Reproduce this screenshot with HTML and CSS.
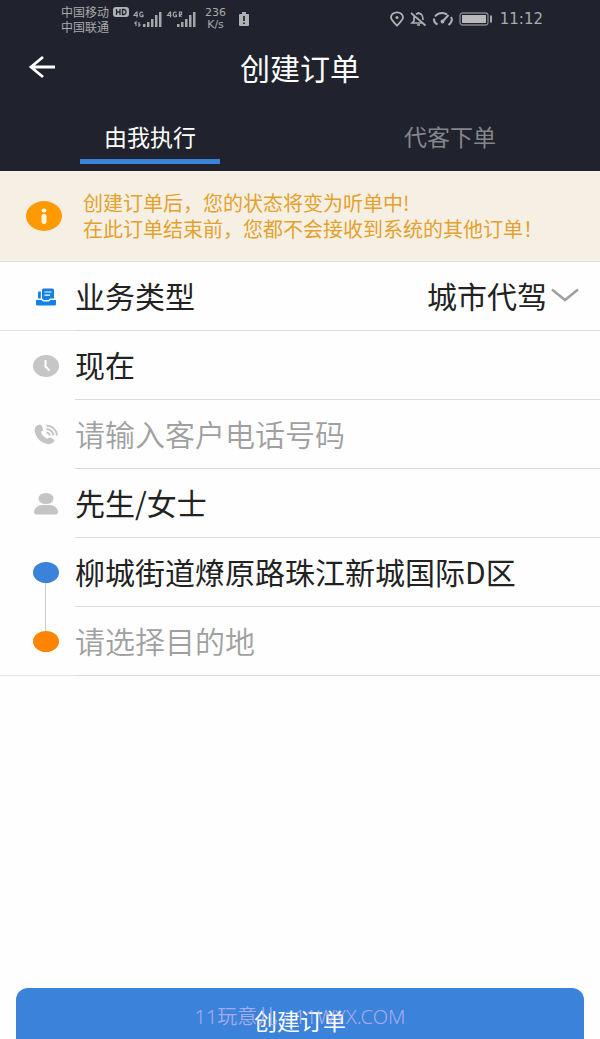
FILE: index.html
```html
<!DOCTYPE html>
<html lang="zh-CN">
<head>
<meta charset="utf-8">
<meta name="viewport" content="width=device-width, initial-scale=1">
<title>创建订单</title>
<link rel="stylesheet" href="styles.css">
</head>
<body>
<div class="app">
  <header class="header">
    <div class="status">
      <div class="status-group">
        <div class="carrier">
          <div class="carrier-line">中国移动
            <svg width="16" height="10" viewBox="0 0 16 10"><rect width="16" height="10" rx="3" fill="#b0b1b5"/><path d="M3.500 2v6M7 2v6M3.500 5H7M9.500 2.500v5h1.500q2-.3 2-2.500t-2-2.500z" fill="none" stroke="#20232d" stroke-width="1.300"/></svg>
          </div>
          <div>中国联通</div>
        </div>
        <svg class="signals" width="64" height="18" viewBox="0 0 64 18" fill="#a5a6aa">
          <path d="M10 14h2.500v3H10zM14 12h2.500v5H14zM18 9h2.500v8H18zM22 5h2.500v12H22zM26 2h2.500v15H26z"/>
          <path d="M44 14h2.500v3H44zM48 12h2.500v5H48zM52 9h2.500v8H52zM56 5h2.500v12H56zM60 2h2.500v15H60z"/>
          <path d="M3.500 2 1 5.500h4M4 1.500v6M10 2.500Q7 1 6.700 4.500 7 7.500 10 6.500V5H8.500M37 2l-2.500 3.500h4M37.500 1.500v6M43.500 2.500Q40.500 1 40.200 4.500q.3 3 3.300 2V5H42M46.500 7V2h2v2.500h-2l2 2.500M3 16v-4l-1.500 1.500M6 12v4l1.500-1.500" fill="none" stroke="#a5a6aa" stroke-width="1.200"/>
        </svg>
        <div class="speed"><div>236</div><div>K/s</div></div>
        <svg width="12" height="16" viewBox="0 0 12 16"><path d="M4 1h4v2h2.500Q11 3 11 4v10q0 1-1 1H2q-1 0-1-1V4q0-1 1-1h2z" fill="#b0b1b5"/><path d="M6 5v5M6 11.500V13" stroke="#20232d" stroke-width="1.700"/></svg>
      </div>
      <div class="status-group status-right">
        <svg width="16" height="16" viewBox="0 0 16 16" fill="none" stroke="#b0b1b5" stroke-width="1.800"><path d="M8 14.500C5 11.500 2 9 2 6.300a6 5 0 0 1 12 0C14 9 11 11.500 8 14.500z"/><circle cx="8" cy="6.500" r="1.500" fill="#b0b1b5" stroke="none"/></svg>
        <svg width="17" height="16" viewBox="0 0 17 16" fill="none" stroke="#b0b1b5" stroke-width="1.700"><path d="M1 2 15.500 14.500M4 5.500v4.500L2 12h9.500M6 3.200Q8.500 1.500 11.500 3.500 13 5 13 9M7 14h3M8.500 1v2"/></svg>
        <svg width="22" height="16" viewBox="0 0 22 16" fill="none" stroke="#b0b1b5" stroke-width="2"><path d="M5.500 13.500Q1.500 11.500 2 7.500M3 5.500Q6 1.500 12 2.200l3 1M19 6q2.500 4-2.500 8"/><path d="m10.500 10.500 6-6.500"/><circle cx="10.500" cy="10.500" r="1.900" fill="#b0b1b5" stroke="none"/></svg>
        <svg width="34" height="14" viewBox="0 0 34 14"><rect x="1" y="1" width="28" height="12" rx="2.500" fill="none" stroke="#85868b" stroke-width="1.300"/><rect x="3" y="3" width="24" height="8" fill="#b9b9bc"/><path d="M31 3.500h2v7h-2z" fill="#a5a6aa"/></svg>
        <time class="clock">11:12</time>
      </div>
    </div>
    <div class="titlebar">
      <button class="back" aria-label="返回"><svg width="28" height="24" viewBox="0 0 28 24" fill="none" stroke="#fff" stroke-width="2.800"><path d="M27 12H3M15 2 3 12l12 10"/></svg></button>
      <h1 class="title">创建订单</h1>
    </div>
    <nav class="tabs">
      <button class="tab tab-active">由我执行</button>
      <button class="tab">代客下单</button>
    </nav>
  </header>

  <section class="notice">
    <svg width="36" height="30" viewBox="0 0 36 30"><ellipse cx="18" cy="15" rx="18" ry="15" fill="#ff9a02"/><ellipse cx="18" cy="9.500" rx="2.500" ry="2" fill="#fff4dc"/><rect x="15.500" y="13" width="5" height="10" rx="2.200" fill="#fff4dc"/></svg>
    <p class="notice-text">创建订单后，您的状态将变为听单中!<br>在此订单结束前，您都不会接收到系统的其他订单！</p>
  </section>

  <form class="form" id="order">
    <div class="row row-edge">
      <div class="icon"><svg width="20" height="18" viewBox="0 0 20 18" fill="#1381e6"><path d="M0 12h5.500l1.500 1.500h6l1.500-1.500H20v4q0 1.500-1.500 1.500h-17Q0 17.500 0 16z"/><path d="M2 4.500Q2 3.500 3 3.500h1.800v7H2z"/><path d="M7.500.5h9Q18 .5 18 2v8.500h-4L12.500 12h-5L6 10.500V2Q6 .5 7.500.5z"/><path d="M8.500 4h7M8.500 7.200h5.500" stroke="#fff" stroke-width="1.200"/></svg></div>
      <div class="field">
        <label class="label" for="type">业务类型</label>
        <select class="select" id="type"><option>城市代驾</option></select>
        <svg class="chevron" width="28" height="14" viewBox="0 0 28 14" fill="none" stroke="#a0a0a0" stroke-width="2.600"><path d="m1 1.500 13 10.500 13-10.500"/></svg>
      </div>
    </div>
    <div class="row">
      <div class="icon"><svg width="26" height="22" viewBox="0 0 26 22"><ellipse cx="13" cy="11" rx="13" ry="11" fill="#c6c6c6"/><path d="M12.500 5v6.500l4 4" fill="none" stroke="#fff" stroke-width="2"/></svg></div>
      <div class="field"><input class="input" aria-label="时间" value="现在"></div>
    </div>
    <div class="row">
      <div class="icon"><svg width="24" height="22" viewBox="0 0 24 22"><path d="M3 1.500 5.500.5q2 0 2.500 1.500l1 3q.3 1.500-1.500 2.500-.8.500-.2 2 1.700 3 5 5 1 .5 2-.5 1.200-1 2.700-.2l2.500 1.500q1.500 1 .3 2.500-2.500 3.500-7.500 2Q5 18 1.800 11-1 4 3 1.500z" fill="#c4c4c4"/><path d="M12.500 8.500q2.700.3 3.300 3M12.500 5q6.200.5 7 6.500M12.500 1.500q9.300.5 10.500 10" fill="none" stroke="#c4c4c4" stroke-width="2"/></svg></div>
      <div class="field"><input class="input" type="tel" aria-label="客户电话" placeholder="请输入客户电话号码"></div>
    </div>
    <div class="row">
      <div class="icon"><svg width="24" height="22" viewBox="0 0 24 22" fill="#c4c4c4"><ellipse cx="12" cy="5.500" rx="7.500" ry="5.500"/><path d="M0 18.500Q1.500 12.500 8 12h8q6.500.5 8 6.500.2 3-2.500 3h-19Q0 21.500 0 18.500z"/></svg></div>
      <div class="field"><input class="input" aria-label="称呼" value="先生/女士"></div>
    </div>
    <div class="route">
      <div class="route-line"></div>
      <div class="row">
        <div class="icon"><span class="dot"></span></div>
        <div class="field"><input class="input" aria-label="出发地" value="柳城街道燎原路珠江新城国际D区"></div>
      </div>
      <div class="row row-edge">
        <div class="icon"><span class="dot dot-end"></span></div>
        <div class="field"><input class="input" aria-label="目的地" placeholder="请选择目的地"></div>
      </div>
    </div>
  </form>

  <footer class="footer">
    <button class="submit" form="order">创建订单</button>
    <span class="watermark">11玩意儿 - 11WYX.COM</span>
  </footer>
</div>
</body>
</html>
```
FILE: styles.css
```css
* { box-sizing: border-box; }
body {
  margin: 0;
  background: #fefefe;
  color: #222;
  font-family: "Noto Sans CJK SC", sans-serif;
}
button, input, select {
  font-family: inherit;
  border: 0;
  padding: 0;
  background: none;
}
svg { display: block; flex: none; }
.app {
  display: flex;
  flex-direction: column;
  min-height: 100vh;
}

.header { background: #20232d; color: #fff; }
.status {
  display: flex;
  justify-content: space-between;
  align-items: center;
  height: 38px;
  padding: 0 57px 0 61px;
  color: #a9aaae;
}
.status-group { display: flex; align-items: center; }
.carrier { font-size: 12px; line-height: 15px; }
.carrier-line { display: flex; align-items: center; gap: 4px; }
.signals { margin-left: 4px; }
.speed {
  margin: 0 12px 0 8px;
  font-family: "DejaVu Sans", sans-serif;
  font-size: 11px;
  line-height: 12px;
  text-align: center;
}
.status-right { gap: 5px; }
.clock {
  margin-left: 2px;
  font-family: "DejaVu Sans", sans-serif;
  font-size: 15px;
}
.titlebar {
  display: grid;
  grid-template-columns: 56px 1fr 56px;
  align-items: center;
  height: 58px;
}
.back { padding-left: 28px; }
.title {
  margin: 0;
  font-size: 30px;
  font-weight: 400;
  line-height: 40px;
  text-align: center;
}
.tabs {
  display: grid;
  grid-template-columns: 1fr 1fr;
  justify-items: center;
  height: 75px;
  padding: 24px 0 7px;
}
.tab {
  width: 140px;
  padding-bottom: 7px;
  border-bottom: 5px solid transparent;
  color: #85868a;
  font-size: 23px;
  line-height: 32px;
}
.tab-active { color: #fff; border-color: #3b82da; }

.notice {
  display: flex;
  align-items: center;
  gap: 21px;
  height: 91px;
  padding: 0 27px 0 26px;
  border-bottom: 1px solid #e2dfda;
  background: #f6f0e4;
}
.notice-text {
  margin: 0;
  color: #e3a12d;
  font-size: 20px;
  line-height: 26px;
  white-space: nowrap;
}

.row {
  display: grid;
  grid-template-columns: 75px 1fr;
  height: 69px;
}
.row-edge { box-shadow: inset 0 -1px #e4e4e4; }
.icon {
  display: flex;
  align-items: center;
  justify-content: center;
  padding: 0 16px 0 33px;
}
.field {
  display: flex;
  align-items: center;
  min-width: 0;
  padding-bottom: 2px;
  border-bottom: 1px solid #dcdcdc;
}
.label, .select, .input { color: #222; font-size: 30px; line-height: 40px; }
.input { width: 100%; height: 48px; outline: 0; }
.input::placeholder { color: #a0a0a0; font-weight: 350; opacity: 1; }
.label { flex: 1; }
.select { appearance: none; height: 48px; }
.chevron { margin: 0 21px 0 4px; }

.route { position: relative; }
.route-line {
  position: absolute;
  top: 34px;
  bottom: 34px;
  left: 45px;
  width: 1px;
  background: #ccc;
}
.dot {
  z-index: 1;
  flex: none;
  width: 26px;
  height: 21px;
  border-radius: 50%;
  background: #3b82da;
}
.dot-end { background: #ff8400; }

.footer {
  position: relative;
  margin-top: auto;
  padding: 0 16px;
}
.submit {
  display: block;
  width: 100%;
  height: 51px;
  padding-top: 12px;
  border-radius: 12px 12px 0 0;
  background: #3b82da;
  color: #fff;
  font-size: 23px;
  line-height: 36px;
}
.watermark {
  position: absolute;
  inset: 14px 0 auto;
  color: #c3b6f2;
  font-family: "Noto Sans", "Noto Sans CJK SC", sans-serif;
  font-size: 20px;
  font-weight: 350;
  line-height: 30px;
  text-align: center;
  opacity: 0.8;
  pointer-events: none;
}
```
